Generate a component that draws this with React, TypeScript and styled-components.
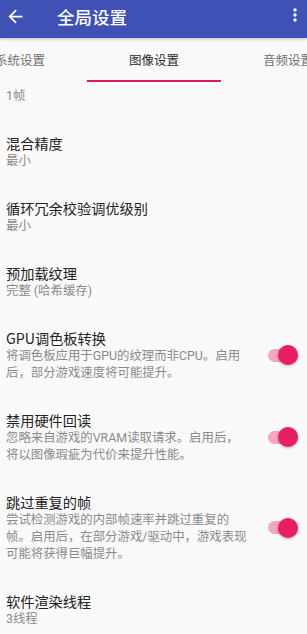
import styled, { createGlobalStyle } from 'styled-components';

const GlobalStyle = createGlobalStyle`
  html, body {
    margin:0;
    padding:0;
    background:#fafafa;
  }
  body {
    font-family:Roboto, "Noto Sans CJK SC", sans-serif;
  }
`;

interface Setting {
  title: string;
  value: string;
  toggle?: boolean;
}

const settings: Setting[] = [
  { title: '帧跳过', value: '1帧' },
  { title: '混合精度', value: '最小' },
  { title: '循环冗余校验调优级别', value: '最小' },
  { title: '预加载纹理', value: '完整 (哈希缓存)' },
  {
    title: 'GPU调色板转换',
    value: '将调色板应用于GPU的纹理而非CPU。启用后，部分游戏速度将可能提升。',
    toggle: true,
  },
  {
    title: '禁用硬件回读',
    value: '忽略来自游戏的VRAM读取请求。启用后，将以图像瑕疵为代价来提升性能。',
    toggle: true,
  },
  {
    title: '跳过重复的帧',
    value: '尝试检测游戏的内部帧速率并跳过重复的帧。启用后，在部分游戏/驱动中，游戏表现可能将获得巨幅提升。',
    toggle: true,
  },
  { title: '软件渲染线程', value: '3线程' },
];

const tabs = ['系统设置', '图像设置', '音频设置'];

export default function App() {
  return (
    <>
      <GlobalStyle />
      <Screen>
        <Toolbar>
          <BackButton>
            <svg width="21" height="21" viewBox="0 0 24 24">
              <path fill="#fff" d="M20 11H7.83l5.59-5.59L12 4l-8 8 8 8 1.41-1.41L7.83 13H20v-2z" />
            </svg>
          </BackButton>
          <Title>全局设置</Title>
          <MenuButton>
            <svg width="6" height="16" viewBox="0 0 6 16">
              <circle cx="3" cy="2" r="1.7" fill="#fff" />
              <circle cx="3" cy="7" r="1.7" fill="#fff" />
              <circle cx="3" cy="12" r="1.7" fill="#fff" />
            </svg>
          </MenuButton>
        </Toolbar>
        <TabBar>
          <TabRow>
            {tabs.map((t, i) => (
              <Tab key={t} active={i === 1}>{t}</Tab>
            ))}
          </TabRow>
        </TabBar>
        <List>
          {settings.map((s, i) => (
            <Item key={s.title} first={i === 0}>
              <Texts>
                <ItemTitle>{s.title}</ItemTitle>
                <ItemValue first={i === 0}>{s.value}</ItemValue>
              </Texts>
              {s.toggle && (
                <Switch>
                  <Track />
                  <Thumb />
                </Switch>
              )}
            </Item>
          ))}
        </List>
      </Screen>
    </>
  );
}

const Screen = styled.div`
  width:307px;
  height:634px;
  display:flex;
  flex-direction:column;
  background:#fafafa;
  overflow:hidden;
`;

const Toolbar = styled.div`
  height:38px;
  flex:none;
  background:#3f51b5;
  display:flex;
  align-items:center;
  position:relative;
  z-index:2;
  box-shadow:0 1px 3px rgba(0,0,0,0.25);
`;

const BackButton = styled.div`
  width:24px;
  margin-left:5px;
  display:flex;
  align-items:center;
  margin-top:-6px;
`;

const Title = styled.div`
  margin-left:28px;
  margin-top:-6px;
  color:#fff;
  font-size:17.5px;
  font-weight:500;
  font-family:"Noto Sans CJK SC", sans-serif;
  flex:1;
`;

const MenuButton = styled.div`
  width:6px;
  margin-right:9px;
  margin-top:-6px;
  display:flex;
`;

const TabBar = styled.div`
  height:44px;
  flex:none;
  overflow:hidden;
  background:#fafafa;
`;

const TabRow = styled.div`
  display:flex;
  margin-left:-47px;
  height:100%;
`;

const Tab = styled.div<{ active: boolean }>`
  width:134px;
  flex:none;
  box-sizing:border-box;
  display:flex;
  align-items:center;
  justify-content:center;
  padding-bottom:${p => p.active ? '0' : '2px'};
  font-size:12.5px;
  font-family:"Noto Sans CJK SC", sans-serif;
  color:${p => p.active ? '#2b2b2b' : '#6f6f6f'};
  border-bottom:${p => p.active ? '2px solid #d81b60' : 'none'};
`;

const List = styled.div`
  flex:1;
  overflow:hidden;
`;

const Item = styled.div<{ first: boolean }>`
  display:flex;
  align-items:center;
  padding:15px 0 15px 6px;
  margin-top:${p => p.first ? '-32px' : '0'};
`;

const Texts = styled.div`
  width:244px;
  flex:none;
`;

const ItemTitle = styled.div`
  font-size:14.2px;
  line-height:18px;
  color:#222;
  font-family:"Noto Sans CJK SC", sans-serif;
`;

const ItemValue = styled.div<{ first?: boolean }>`
  margin-top:${p => p.first ? '4px' : '0'};
  font-size:12.4px;
  line-height:17px;
  color:#8a8a8a;
  font-family:Roboto, "Noto Sans CJK SC", sans-serif;
`;

const Switch = styled.div`
  position:relative;
  width:32px;
  height:20px;
  margin-left:18px;
`;

const Track = styled.div`
  position:absolute;
  left:0;
  top:3.5px;
  width:30px;
  height:13px;
  border-radius:7px;
  background:#f4a6c3;
`;

const Thumb = styled.div`
  position:absolute;
  right:2px;
  top:0;
  width:20px;
  height:20px;
  border-radius:50%;
  background:#e91e63;
  box-shadow:0 1px 3px rgba(0,0,0,0.3);
`;
